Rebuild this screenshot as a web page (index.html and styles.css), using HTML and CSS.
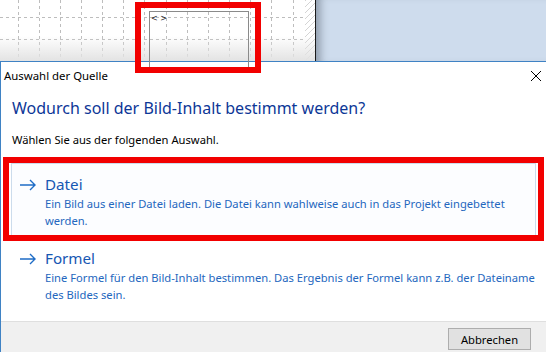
FILE: index.html
```html
<!DOCTYPE html>
<html lang="de">
<head>
  <meta charset="UTF-8" />
  <title>Auswahl der Quelle</title>
  <link rel="stylesheet" href="styles.css">
</head>
<body>
  <div class="screen">
    <div class="workspace">
      <div class="sheet">
        <svg class="grid" width="315" height="61" viewBox="0 0 315 61">
          <defs>
            <linearGradient id="fade" x1="0" y1="0" x2="0" y2="1">
              <stop offset="0" stop-color="#e3e3e3" stop-opacity="0" />
              <stop offset="1" stop-color="#e3e3e3" stop-opacity="1" />
            </linearGradient>
            <pattern id="hatch" width="6" height="6" patternUnits="userSpaceOnUse">
              <path d="M0 6 L6 0" stroke="#d4d4d4" stroke-width="1" />
            </pattern>
          </defs>
          <rect width="315" height="61" fill="#fff" />
          <g stroke="#bdbdbd" stroke-width="1" stroke-dasharray="3 3">
            <path d="M18.5 0V61 M39.5 0V61 M60.5 0V61 M81.5 0V61 M102.5 0V61 M123.5 0V61 M144.5 0V61 M166.5 0V61 M187.5 0V61 M208.5 0V61 M229.5 0V61 M250.5 0V61 M271.5 0V61 M293.5 0V61" />
            <path d="M0 17.5H305 M0 39.5H305" />
          </g>
          <rect x="305" y="0" width="10" height="61" fill="url(#hatch)" />
          <rect x="0" y="36" width="315" height="25" fill="url(#fade)" />
        </svg>
        <div class="element"><span class="tag">&lt; &gt;</span></div>
      </div>
      <div class="desk"></div>
    </div>

    <div class="dialog">
      <div class="titlebar">
        <span class="title">Auswahl der Quelle</span>
        <svg class="close" width="10" height="10" viewBox="0 0 10 10">
          <path d="M0 0 L10 10 M10 0 L0 10" stroke="#000" stroke-width="1" />
        </svg>
      </div>

      <div class="content">
        <h1 class="instruction">Wodurch soll der Bild-Inhalt bestimmt werden?</h1>
        <p class="hint">Wählen Sie aus der folgenden Auswahl.</p>

        <div class="option hover">
          <svg class="arrow" width="18" height="12" viewBox="0 0 18 12">
            <path d="M1 6 H16 M11 1 L16 6 L11 11" fill="none" stroke="#1e6cc6" stroke-width="1.4" />
          </svg>
          <div class="option-text">
            <div class="option-title">Datei</div>
            <div class="option-desc">Ein Bild aus einer Datei laden. Die Datei kann wahlweise auch in das Projekt eingebettet werden.</div>
          </div>
        </div>

        <div class="option">
          <svg class="arrow" width="18" height="12" viewBox="0 0 18 12">
            <path d="M1 6 H16 M11 1 L16 6 L11 11" fill="none" stroke="#1e6cc6" stroke-width="1.4" />
          </svg>
          <div class="option-text">
            <div class="option-title">Formel</div>
            <div class="option-desc">Eine Formel für den Bild-Inhalt bestimmen. Das Ergebnis der Formel kann z.B. der Dateiname des Bildes sein.</div>
          </div>
        </div>
      </div>

      <div class="footer">
        <button class="cancel">Abbrechen</button>
      </div>
    </div>

    <!-- red annotation frames drawn over the screenshot -->
    <div class="mark mark-element"></div>
    <div class="mark mark-option"></div>
  </div>
</body>
</html>
```

FILE: styles.css
```css
body {
  margin: 0;
  padding: 0;
  font-family: "Noto Sans", "Open Sans", sans-serif;
  background-color: #fff;
}

.screen {
  width: 546px;
  height: 352px;
  position: relative;
  overflow: hidden;
}

.workspace {
  display: flex;
  height: 61px;
}

.sheet {
  width: 315px;
  height: 61px;
  border-right: 1px solid #1a1a1a;
  position: relative;
}

.grid {
  display: block;
}

.element {
  position: absolute;
  left: 149px;
  top: 11px;
  width: 98px;
  height: 60px;
  border: 1px solid #8a8a8a;
}

.tag {
  display: block;
  font-family: "DejaVu Sans", sans-serif;
  font-size: 8px;
  line-height: 10px;
  margin: 2px 0 0 1px;
  color: #222;
}

.desk {
  flex: 1;
  background-color: #cedced;
  box-shadow: inset 10px 0 8px -6px rgba(60, 70, 85, 0.45);
}

.dialog {
  height: 291px;
  border-top: 1px solid #3f82c4;
  border-left: 1px solid #3f82c4;
  background-color: #fff;
  display: flex;
  flex-direction: column;
}

.titlebar {
  height: 26px;
  display: flex;
  align-items: center;
  justify-content: space-between;
  padding: 0 5px 0 3px;
}

.title {
  font-size: 11.4px;
  color: #000;
}

.close {
  display: block;
  margin-top: 1px;
}

.content {
  flex: 1;
  padding: 0 10px;
}

.instruction {
  margin: 10px 0 0 1px;
  font-size: 16px;
  font-weight: normal;
  line-height: 21px;
  color: #0d3797;
}

.hint {
  margin: 13px 0 0 1px;
  font-size: 11.2px;
  line-height: 16px;
  color: #000;
}

.option {
  display: flex;
  align-items: flex-start;
  margin-top: 15px;
  padding: 10px 0 7px 7px;
  border: 1px solid transparent;
}

.option + .option {
  margin-top: 0;
}

.option.hover {
  border-color: #ccdcec;
  background-color: #fcfdff;
}

.arrow {
  flex: none;
  margin: 5px 8px 0 0;
}

.option-title {
  font-size: 15.2px;
  line-height: 21px;
  color: #1657b3;
}

.option-desc {
  font-size: 11.2px;
  line-height: 17px;
  color: #2467be;
}

.footer {
  height: 32px;
  border-top: 1px solid #dfdfdf;
  background-color: #f0f0f0;
  display: flex;
  justify-content: flex-end;
  align-items: flex-start;
  padding: 6px 15px 0 0;
  box-sizing: border-box;
}

.cancel {
  width: 83px;
  height: 22px;
  padding: 0;
  font-family: "Noto Sans", "Open Sans", sans-serif;
  font-size: 11.2px;
  color: #000;
  background-color: #e1e1e1;
  border: 1px solid #adadad;
  border-radius: 0;
}

.mark {
  position: absolute;
  border: 6px solid #f20000;
  box-sizing: border-box;
}

.mark-element {
  left: 135px;
  top: 2px;
  width: 126px;
  height: 71px;
}

.mark-option {
  left: 3px;
  top: 157px;
  width: 541px;
  height: 84px;
}
```
